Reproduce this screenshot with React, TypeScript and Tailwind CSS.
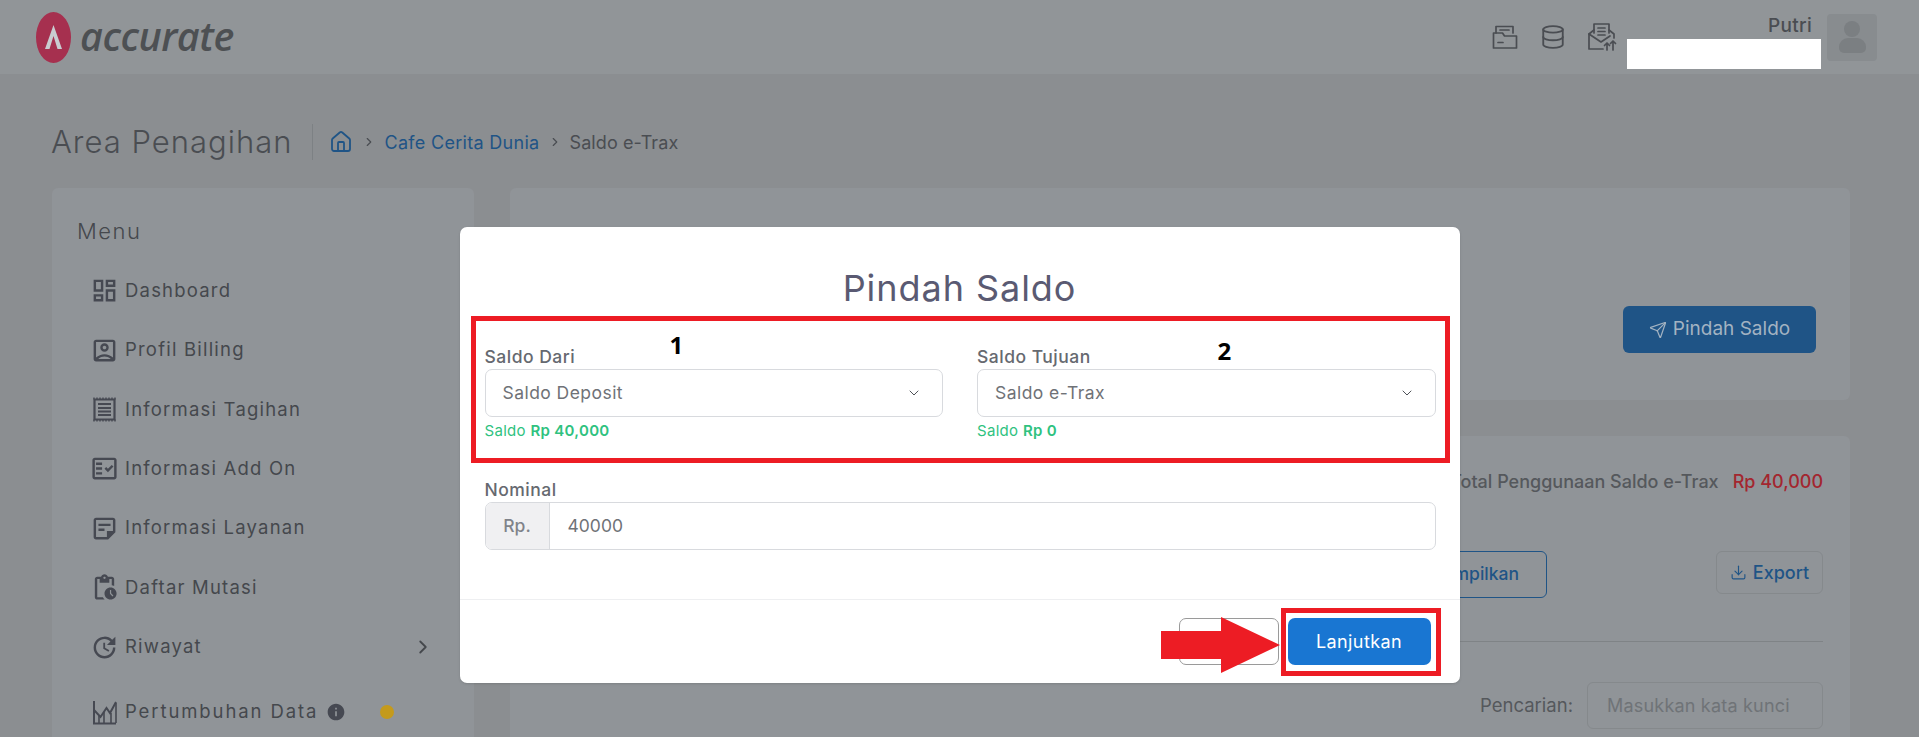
import { ChevronDown, ChevronRight, Database, House, Send, Download } from 'lucide-react';
import {
  MdOutlineDashboard,
  MdOutlineAccountBox,
  MdOutlineFactCheck,
  MdOutlineStickyNote2,
  MdOutlinePendingActions,
  MdOutlineUpdate,
  MdInfo,
} from 'react-icons/md';

function ReceiptIcon() {
  return (
    <svg width="29" height="29" viewBox="0 0 29 29" fill="none" stroke="currentColor" className="shrink-0 text-[#464952]">
      <path d="M4.5 4.5h20v20h-20z" strokeWidth="2.2" />
      <path d="M4 2.5v2M7 2.5v2M10 2.5v2M13 2.5v2M16 2.5v2M19 2.5v2M22 2.5v2M25 2.5v2M4 24.5v2M7 24.5v2M10 24.5v2M13 24.5v2M16 24.5v2M19 24.5v2M22 24.5v2M25 24.5v2" strokeWidth="1.4" />
      <path d="M8 9h13M8 13h13M8 16.5h13M8 20h13" strokeWidth="2" />
    </svg>
  );
}

function GrowthIcon() {
  return (
    <svg width="29" height="29" viewBox="0 0 29 29" fill="none" stroke="currentColor" strokeWidth="2" className="shrink-0 text-[#464952]">
      <path d="M4 3v22.5h22" />
      <path d="M4 12l6.5 7 6-9 3.5 5 6-11" />
      <path d="M9 18v7M14 14v11M21 15v10M26 5v20" strokeWidth="1.6" />
    </svg>
  );
}

const menu = [
  { label: 'Dashboard', icon: <MdOutlineDashboard size={29} className="shrink-0 text-[#464952]" /> },
  { label: 'Profil Billing', icon: <MdOutlineAccountBox size={29} className="shrink-0 text-[#464952]" /> },
  { label: 'Informasi Tagihan', icon: <ReceiptIcon /> },
  { label: 'Informasi Add On', icon: <MdOutlineFactCheck size={29} className="shrink-0 text-[#464952]" /> },
  { label: 'Informasi Layanan', icon: <MdOutlineStickyNote2 size={29} className="shrink-0 text-[#464952]" /> },
  { label: 'Daftar Mutasi', icon: <MdOutlinePendingActions size={29} className="shrink-0 text-[#464952]" /> },
];

function SaldoSelect({ label, value, saldo }: { label: string; value: string; saldo: string }) {
  return (
    <div className="flex-1">
      <div className="text-[17.5px] leading-[22px] font-medium text-[#666970] tracking-[0.5px]">{label}</div>
      <div className="mt-[1px] h-[48px] rounded-[7px] border border-[#d8dade] flex items-center justify-between pl-[17px] pr-[20px]">
        <span className="text-[17.5px] text-[#6f7277] tracking-[0.45px]">{value}</span>
        <ChevronDown size={16} strokeWidth={1.5} className="text-[#4f5258]" />
      </div>
      <div className="mt-[5px] text-[15px] leading-[18px] text-[#2fc27f] tracking-[0.3px]">
        Saldo <span className="font-semibold">{saldo}</span>
      </div>
    </div>
  );
}

export default function App() {
  return (
    <div
      className="relative h-[737px] overflow-hidden bg-[#8b8e91] text-[#45484d]"
      style={{ fontFamily: 'Inter, "Noto Sans", sans-serif' }}
    >
      {/* Header */}
      <header className="h-[74px] bg-[#919598] flex items-center justify-between pl-[36px] pr-[42px]">
        <div className="flex items-center gap-[9px]">
          <svg width="35" height="51" viewBox="0 0 35 51" className="mt-[1px]">
            <ellipse cx="17.5" cy="25.5" rx="17.5" ry="25.5" fill="#a6304f" />
            <path d="M17.5 13 L26 37 L21.5 37 L17.5 24 L13.5 37 L9 37 Z" fill="#c9ccd0" />
          </svg>
          <span
            className="text-[39.5px] leading-none italic font-semibold text-[#4d5053] tracking-[-0.5px]"
            style={{ fontFamily: '"Open Sans", sans-serif' }}
          >
            accurate
          </span>
        </div>
        <div className="flex items-center">
          <div className="flex items-center gap-[22px] mr-[29px] text-[#4a4d52]">
            <svg width="26" height="26" viewBox="0 0 26 26" fill="none" stroke="currentColor" strokeWidth="1.7" strokeLinejoin="round" strokeLinecap="round">
              <path d="M4 9V2.5h17V9" />
              <path d="M8 6h9" />
              <path d="M1.5 9h9l2 3h12v12h-23z" />
              <path d="M6 18.5h5" />
            </svg>
            <Database size={26} strokeWidth={1.7} />
            <svg width="30" height="30" viewBox="0 0 30 30" fill="none" stroke="currentColor" strokeWidth="1.7" strokeLinejoin="round" strokeLinecap="round">
              <path d="M6 11V2h15v9" />
              <path d="M10 6h7M10 9.5h7M10 13h7" />
              <path d="M6 8l-5 4v15h14" />
              <path d="M21 8l5 4v4" />
              <path d="M1 12l12 8 9-6" />
              <path d="M19 28v-7M16.5 23.5l2.5-2.5 2.5 2.5" />
              <path d="M25 28v-9M22.5 21.5l2.5-2.5 2.5 2.5" />
            </svg>
          </div>
          <div className="flex items-start gap-[15px]">
            <div className="w-[165px] text-right text-[19px] leading-[22px] pt-[1px] font-medium tracking-[0.3px] text-[#4a4d52]">Putri</div>
            <div className="w-[50px] h-[47px] rounded-[4px] bg-[#888c8f] flex flex-col items-center justify-center">
              <div className="w-[16px] h-[16px] rounded-full bg-[#7b7f82]" />
              <div className="w-[27px] h-[15px] mt-[1px] rounded-t-[9px] rounded-b-[5px] bg-[#7b7f82]" />
            </div>
          </div>
        </div>
      </header>

      {/* Title and breadcrumb */}
      <div className="h-[114px] pl-[51px] flex items-center pt-[22px]">
        <h1 className="text-[31px] font-light tracking-[1px] text-[#4a4d52]">Area Penagihan</h1>
        <div className="w-px h-[36px] bg-[#7d8184] ml-[19px] mr-[16px]" />
        <House size={24} strokeWidth={1.8} className="text-[#1f5486]" />
        <ChevronRight size={14} className="mx-[9px] text-[#4a4d52]" />
        <span className="text-[18px] tracking-[0.3px] text-[#1f5486]">Cafe Cerita Dunia</span>
        <ChevronRight size={14} className="mx-[8px] text-[#4a4d52]" />
        <span className="text-[18px] tracking-[0.1px] text-[#4a4d52]">Saldo e-Trax</span>
      </div>

      {/* Body */}
      <div className="flex gap-[36px] pl-[52px] pr-[69px]">
        <aside className="w-[422px] h-[600px] shrink-0 rounded-t-[6px] bg-[#909498] pt-[30px]">
          <div className="pl-[25px] text-[22px] leading-[26px] font-light tracking-[1.5px]">Menu</div>
          <div className="pl-[38px] pr-[40px] mt-[17px] flex flex-col">
            {menu.map((m) => (
              <div key={m.label} className="h-[59.4px] flex items-center gap-[6px] text-[18.5px] tracking-[1.2px]">
                {m.icon}
                <span>{m.label}</span>
              </div>
            ))}
            <div className="h-[59.4px] flex items-center gap-[6px] text-[18.5px] tracking-[1.2px]">
              <MdOutlineUpdate size={29} className="shrink-0 text-[#464952]" />
              <span>Riwayat</span>
              <ChevronRight size={22} className="ml-auto" />
            </div>
            <div className="h-[71px] flex items-center gap-[6px] text-[18.5px] tracking-[1.9px]">
              <GrowthIcon />
              <span>Pertumbuhan Data</span>
              <MdInfo size={20} className="ml-[2px] text-[#464952]" />
              <span className="ml-[28px] w-[14px] h-[14px] rounded-full bg-[#c49a1c]" />
            </div>
          </div>
        </aside>

        <main className="flex-1 flex flex-col gap-[36px]">
          <section className="h-[212px] rounded-[6px] bg-[#909498] pt-[118px] pr-[34px] flex justify-end items-start">
            <button className="w-[193px] h-[47px] rounded-[6px] bg-[#1f5486] text-[#a3b3c2] text-[19px] flex items-center justify-center gap-[6px]">
              <Send size={18} strokeWidth={1.6} />
              Pindah Saldo
            </button>
          </section>

          <section className="h-[320px] rounded-[6px] bg-[#909498] px-[27px] pt-[34px]">
            <div className="flex justify-end gap-[14px] text-[18px] leading-[24px] font-medium">
              <span className="text-[#55585c]">Total Penggunaan Saldo e-Trax</span>
              <span className="text-[#a3262f]">Rp 40,000</span>
            </div>
            <div className="mt-[57px] flex justify-between items-start">
              <button className="ml-[810px] w-[200px] h-[47px] rounded-[6px] border border-[#1f5486] text-[#1f5486] text-[17.5px] font-medium text-right pr-[27px]">
                Tampilkan
              </button>
              <button className="w-[107px] h-[43px] rounded-[6px] border border-[#85898c] text-[#1f5486] text-[18px] font-medium flex items-center justify-center gap-[6px]">
                <Download size={17} strokeWidth={1.6} />
                Export
              </button>
            </div>
            <div className="mt-[43px] h-px bg-[#7f8386]" />
            <div className="mt-[40px] flex justify-end items-center gap-[14px]">
              <span className="text-[18.5px] text-[#55585c]">Pencarian:</span>
              <div className="w-[236px] h-[47px] rounded-[6px] border border-[#85898c] flex items-center pl-[19px] text-[18px] tracking-[0.2px] text-[#6f7377]">
                Masukkan kata kunci
              </div>
            </div>
          </section>
        </main>
      </div>

      {/* Redacted name */}
      <div className="absolute left-[1627px] top-[39px] w-[194px] h-[30px] bg-white" />

      {/* Modal */}
      <div className="absolute inset-0 flex justify-center items-start pt-[227px]">
        <div className="relative w-[1000px] h-[456px] rounded-[7px] bg-white flex flex-col shadow-sm">
          <h2 className="mt-[38px] text-center text-[36px] leading-[46px] text-[#5a5a72] tracking-[0.95px]">Pindah Saldo</h2>
          <div className="pl-[25px] pr-[24px] mt-[35px] flex gap-[34px]">
            <SaldoSelect label="Saldo Dari" value="Saldo Deposit" saldo="Rp 40,000" />
            <SaldoSelect label="Saldo Tujuan" value="Saldo e-Trax" saldo="Rp 0" />
          </div>
          <div className="pl-[25px] pr-[24px] mt-[39px]">
            <div className="text-[17.5px] leading-[22px] font-medium text-[#666970] tracking-[0.5px]">Nominal</div>
            <div className="mt-[1px] h-[48px] rounded-[7px] border border-[#d8dade] flex overflow-hidden">
              <div className="w-[64px] bg-[#f0f0f2] border-r border-[#d8dade] flex items-center justify-center text-[17.5px] font-medium text-[#80838a]">Rp.</div>
              <div className="pl-[18px] flex items-center text-[17.5px] text-[#6f7277]">40000</div>
            </div>
          </div>
          <div className="mt-[49px] border-t border-[#eeeff1] flex-1 flex justify-end items-start gap-[9px] pr-[29px] pt-[18px]">
            <button className="w-[100px] h-[47px] rounded-[7px] border border-[#9a9a9a] bg-white" />
            <button className="w-[143px] h-[47px] rounded-[7px] bg-[#1976d2] text-white text-[18px] tracking-[0.4px]">Lanjutkan</button>
          </div>

          {/* Tutorial annotations */}
          <div className="absolute left-[11px] top-[89px] w-[979px] h-[147px] border-[5px] border-[#ed1c24]" />
          <span className="absolute left-[210px] top-[103px] text-[24px] leading-[30px] font-bold text-black" style={{ fontFamily: '"Open Sans", sans-serif' }}>1</span>
          <span className="absolute left-[758px] top-[109px] text-[24px] leading-[30px] font-bold text-black" style={{ fontFamily: '"Open Sans", sans-serif' }}>2</span>
          <div className="absolute left-[821px] top-[381px] w-[160px] h-[68px] border-[5px] border-[#ed1c24]" />
          <svg className="absolute left-[701px] top-[390px]" width="119" height="56" viewBox="0 0 119 56">
            <path d="M0 14H60V0L119 28L60 56V42H0Z" fill="#ed1c24" />
          </svg>
        </div>
      </div>
    </div>
  );
}
